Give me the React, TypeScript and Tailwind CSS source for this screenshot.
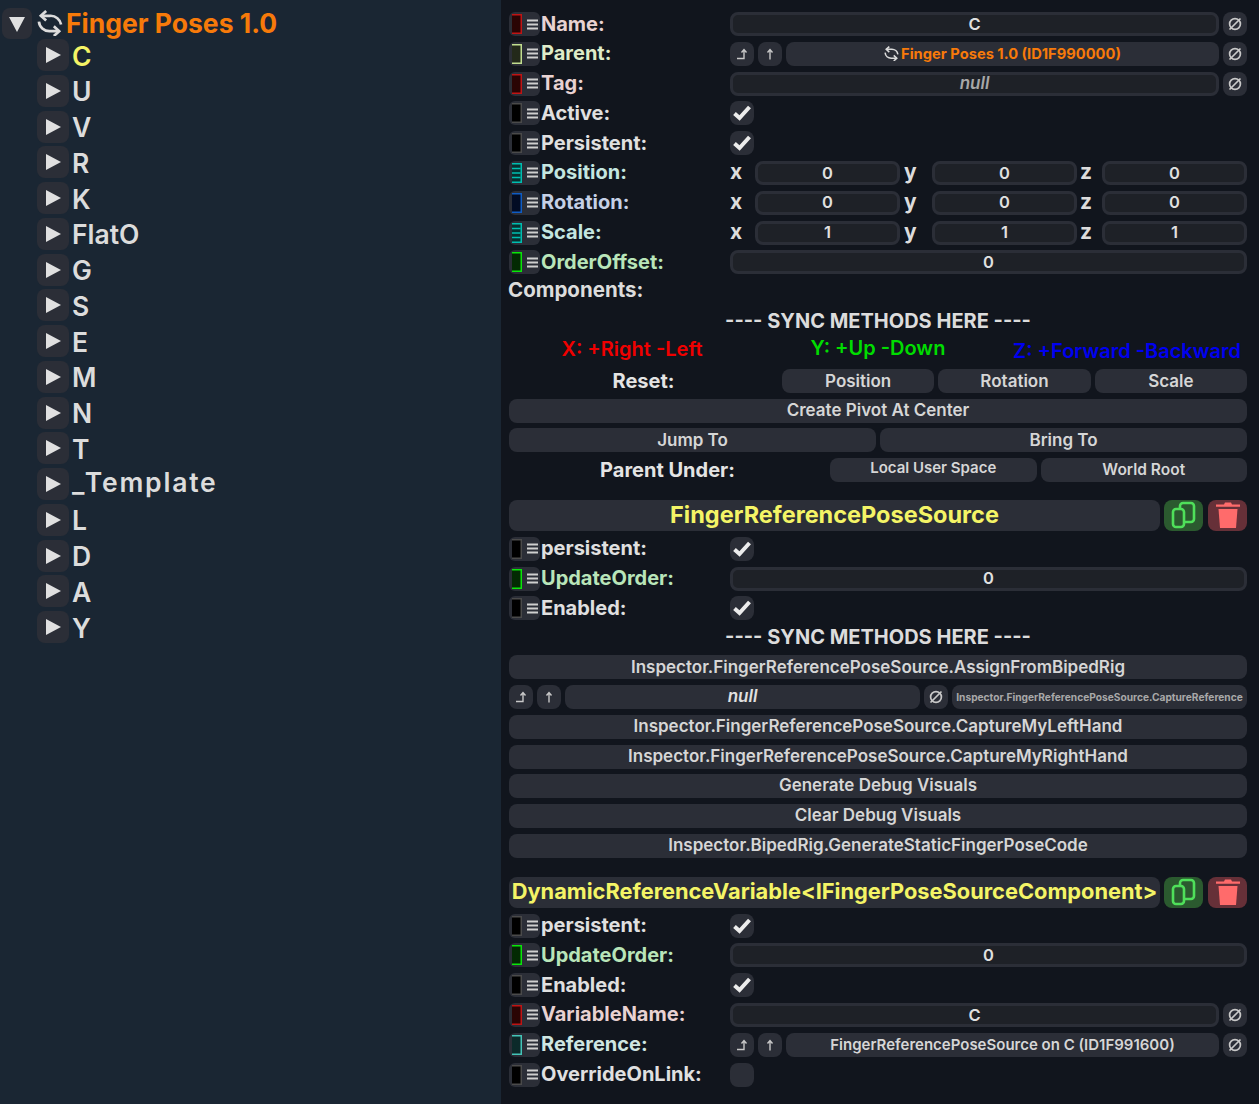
import React from "react";
import { twMerge } from "tailwind-merge";

function Arrow({ open }: { open?: boolean }) {
  return (
    <svg width="18" height="18" viewBox="0 0 18 18">
      {open ? <polygon points="1,2 17,2 9,17" fill="#e0e0e0" /> : <polygon points="2,1 17,9 2,17" fill="#e0e0e0" />}
    </svg>
  );
}

function SyncIcon({ size, cls = "" }: { size: number; cls?: string }) {
  return (
    <svg width={size} height={size} viewBox="0 0 27 27" fill="none" stroke="#dcdcdc" strokeWidth="2.8" className={`shrink-0 ${cls}`}>
      <path d="M4 6H14A11 11 0 0 1 25 15" />
      <path d="M9.5 1L4 6L9.5 11" />
      <path d="M2 12A11 11 0 0 0 13 22H23" />
      <path d="M17.5 17L23 22L17.5 27" />
    </svg>
  );
}

function TreeRow({ label, color = "text-[#dcdcdc]", cls = "pt-px" }: { label: string; color?: string; cls?: string }) {
  return (
    <div className="flex items-center h-8">
      <div className="w-8 h-8 rounded-lg bg-[#2b2e37] flex items-center justify-center"><Arrow /></div>
      <span className={`ml-[3px] text-[26.5px] leading-8 font-semibold ${color} ${cls}`}>{label}</span>
    </div>
  );
}

function Slot({ kind }: { kind: string }) {
  const m: Record<string, [string, string]> = {
    red: ["#c01414", "#2a0404"],
    lime: ["#c2de90", "#23291a"],
    black: ["#4a4a4a", "#000000"],
    teal: ["#00bdb0", "#06302f"],
    blue: ["#0f5cc4", "#020c24"],
    green: ["#0ae60a", "#032a03"],
    ref: ["#45c4b8", "#0c2a2a"],
  };
  const [c, f] = m[kind];
  return (
    <svg width="10" height="20" viewBox="0 0 10 20" className="shrink-0">
      <rect x="0" y="0" width="10" height="20" fill={f} />
      <path d="M0 .75H9.25V19.25H0" fill="none" stroke={c} strokeWidth="1.5" />
      {kind === "teal" && <path d="M0 5.5H8.5M0 10H8.5M0 14.5H8.5" stroke={c} strokeWidth="1.7" />}
    </svg>
  );
}

function Handle({ kind }: { kind: string }) {
  return (
    <div className="w-[31px] h-6 shrink-0 rounded-md bg-[#2b2e37] flex items-center pl-[3px]">
      <Slot kind={kind} />
      <svg width="11" height="11" viewBox="0 0 11 11" className="ml-[5px] shrink-0">
        <path d="M0 1.5H11M0 5.5H11M0 9.5H11" stroke="#cfcfcf" strokeWidth="2" />
      </svg>
    </div>
  );
}

function Label({ kind, text, color }: { kind: string; text: string; color: string }) {
  return (
    <div className="w-[221px] shrink-0 flex items-center h-6">
      <Handle kind={kind} />
      <span className={`ml-px -mt-px text-[20px] leading-6 font-bold whitespace-nowrap ${color}`}>{text}</span>
    </div>
  );
}

function Field({ children, cls = "" }: { children?: React.ReactNode; cls?: string }) {
  return (
    <div className={twMerge("h-6 min-w-0 rounded-lg border-[3px] border-[#2b2e37] bg-[#1e2127] flex items-center justify-center text-[16.5px] font-semibold text-[#e0e0e0]", cls)}>
      {children}
    </div>
  );
}

function Btn({ children, cls = "" }: { children?: React.ReactNode; cls?: string }) {
  return (
    <div className={twMerge("h-6 min-w-0 rounded-lg bg-[#2b2e37] flex items-center justify-center text-[17px] font-semibold text-[#d6d6d6] whitespace-nowrap", cls)}>
      {children}
    </div>
  );
}

function NullBtn() {
  return (
    <Btn cls="w-6 shrink-0">
      <svg width="16" height="16" viewBox="0 0 16 16" fill="none" stroke="#c8c8c8" strokeWidth="1.7">
        <circle cx="8" cy="8" r="5.4" />
        <path d="M2.5 13.5L13.5 2.5" />
      </svg>
    </Btn>
  );
}

function UpBtns() {
  return (
    <>
      <Btn cls="w-6 shrink-0">
        <svg width="14" height="14" viewBox="0 0 14 14" fill="none" stroke="#c8c8c8" strokeWidth="1.4">
          <path d="M2 11.5H9V3.5M6.5 5.5L9 2.5L11.5 5.5" />
        </svg>
      </Btn>
      <Btn cls="w-6 shrink-0">
        <svg width="14" height="14" viewBox="0 0 14 14" fill="none" stroke="#c8c8c8" strokeWidth="1.4">
          <path d="M7 12.5V2.5M4.5 5.5L7 2.5L9.5 5.5" />
        </svg>
      </Btn>
    </>
  );
}

function Check() {
  return (
    <Btn cls="w-6 shrink-0">
      <svg width="20" height="18" viewBox="0 0 20 18" fill="none" stroke="#ececec" strokeWidth="4">
        <path d="M2.5 9.5L7.5 14L17.5 3" />
      </svg>
    </Btn>
  );
}

function CheckRow({ text }: { text: string }) {
  return (
    <div className="flex items-center h-6">
      <Label kind="black" text={text} color="text-[#e0e0e0]" />
      <Check />
    </div>
  );
}

function Vec({ kind, text, color, v }: { kind: string; text: string; color: string; v: string }) {
  const axis = "text-[21px] font-bold text-[#dcdcdc] -mt-0.5";
  return (
    <div className="flex items-center h-6">
      <Label kind={kind} text={text} color={color} />
      <span className={`w-[25px] leading-6 ${axis}`}>x</span>
      <Field cls="w-[145px]">{v}</Field>
      <span className={`w-[32px] pl-[4px] leading-5 ${axis}`}>y</span>
      <Field cls="w-[145px]">{v}</Field>
      <span className={`w-[25px] pl-[3px] leading-6 ${axis}`}>z</span>
      <Field cls="w-[145px]">{v}</Field>
    </div>
  );
}

function NumRow({ text }: { text: string }) {
  return (
    <div className="flex items-center h-6">
      <Label kind="green" text={text} color="text-[#b9e5b9]" />
      <Field cls="flex-1">0</Field>
    </div>
  );
}

function SyncHeading() {
  return (
    <div className="h-6 text-center text-[20px] leading-6 font-bold text-[#dcdcdc]">---- SYNC METHODS HERE ----</div>
  );
}

function Header({ title, cls }: { title: string; cls: string }) {
  return (
    <div className="flex h-[31px] gap-1">
      <div className={`flex-1 min-w-0 rounded-lg bg-[#2b2e37] flex items-center justify-center pb-0.5 font-bold text-[#f4f466] whitespace-nowrap ${cls}`}>{title}</div>
      <div className="w-[39px] rounded-lg bg-[#2b5a2f] flex items-center justify-center">
        <svg width="26" height="28" viewBox="0 0 26 28" fill="none" stroke="#4fe05a" strokeWidth="2.6">
          <rect x="2" y="8" width="11" height="18" rx="3" />
          <path d="M9 8V5a3 3 0 0 1 3-3h8a3 3 0 0 1 3 3v13a3 3 0 0 1-3 3h-7" />
        </svg>
      </div>
      <div className="w-[39px] rounded-lg bg-[#663038] flex items-center justify-center ml-px">
        <svg width="24" height="28" viewBox="0 0 24 28" fill="#ff6b6b">
          <path d="M8 3.5 9 1.5H15L16 3.5H24V5.8H0V3.5Z" />
          <path d="M2.5 8H21.5L20 27H4Z" />
        </svg>
      </div>
    </div>
  );
}

export default function App() {
  const names = ["U", "V", "R", "K", "FlatO", "G", "S", "E", "M", "N", "T"];
  const names2 = ["L", "D", "A", "Y"];
  return (
    <div className="w-[1259px] h-[1104px] flex overflow-hidden font-['Inter',sans-serif] bg-[#11151d]">
      <div className="w-[501px] shrink-0 bg-[#1a2633] pt-2 pl-0.5">
        <div className="flex items-center h-[31px]">
          <div className="w-[30px] h-[31px] rounded-lg bg-[#2b2e37] flex items-center justify-center"><Arrow open /></div>
          <SyncIcon size={26} cls="ml-[5px] -mt-px" />
          <span className="ml-[3px] -mt-0.5 text-[26.5px] leading-8 font-bold text-[#f77a0a] whitespace-nowrap">Finger Poses 1.0</span>
        </div>
        <div className="flex flex-col gap-[3.75px] pl-[35px]">
          <TreeRow label="C" color="text-[#f4f466]" />
          {names.map((n) => <TreeRow key={n} label={n} />)}
          <TreeRow label="_Template" cls="tracking-[1.8px] -mt-1" />
          {names2.map((n) => <TreeRow key={n} label={n} />)}
        </div>
      </div>

      <div className="w-[738px] shrink-0 ml-2 pt-3 flex flex-col">
        <div className="flex flex-col gap-[5.8px]">
          <div className="flex items-center gap-1 h-6">
            <Label kind="red" text="Name:" color="text-[#e8d2d2]" />
            <Field cls="flex-1 -ml-1">C</Field>
            <NullBtn />
          </div>
          <div className="flex items-center gap-1 h-6">
            <Label kind="lime" text="Parent:" color="text-[#dfecc9]" />
            <div className="-ml-1 flex gap-1 flex-1 min-w-0">
              <UpBtns />
              <Btn cls="flex-1 text-[#f77a0a] text-[14.7px] font-bold">
                <SyncIcon size={15} cls="mr-[2px]" />
                Finger Poses 1.0 (ID1F990000)
              </Btn>
            </div>
            <NullBtn />
          </div>
          <div className="flex items-center gap-1 h-6">
            <Label kind="red" text="Tag:" color="text-[#e8d2d2]" />
            <Field cls="flex-1 -ml-1 italic text-[#a8a8a8] text-[17px]">null</Field>
            <NullBtn />
          </div>
          <CheckRow text="Active:" />
          <CheckRow text="Persistent:" />
          <Vec kind="teal" text="Position:" color="text-[#c4e6e0]" v="0" />
          <Vec kind="blue" text="Rotation:" color="text-[#c5d0e6]" v="0" />
          <Vec kind="teal" text="Scale:" color="text-[#c4e6e0]" v="1" />
          <div className="flex items-center h-6">
            <Label kind="green" text="OrderOffset:" color="text-[#b9e5b9]" />
            <Field cls="flex-1">0</Field>
          </div>
        </div>

        <div className="mt-0.5 h-[27px] -ml-px text-[20.5px] leading-[27px] font-bold text-[#dcdcdc]">Components:</div>
        <div className="mt-1.5"><SyncHeading /></div>

        <div className="mt-[3px] h-[26px] flex text-[20px] leading-[26px] font-semibold whitespace-nowrap">
          <div className="w-[246px] text-center text-[#f00000]">X: +Right -Left</div>
          <div className="w-[246px] text-center text-[#00dc00] -mt-px">Y: +Up -Down</div>
          <div className="w-[246px] text-center text-[#0000f0] mt-0.5 pl-1.5">Z: +Forward -Backward</div>
        </div>

        <div className="mt-[7px] flex flex-col gap-[5.5px]">
          <div className="flex items-center gap-1 h-6">
            <div className="w-[269px] text-center text-[20px] font-bold text-[#e4e4e4]">Reset:</div>
            <Btn cls="flex-1">Position</Btn>
            <Btn cls="flex-1">Rotation</Btn>
            <Btn cls="flex-1">Scale</Btn>
          </div>
          <Btn>Create Pivot At Center</Btn>
          <div className="flex gap-1">
            <Btn cls="flex-1">Jump To</Btn>
            <Btn cls="flex-1">Bring To</Btn>
          </div>
          <div className="flex items-center gap-1 h-6">
            <div className="w-[317px] text-center text-[20px] font-bold text-[#e4e4e4]">Parent Under:</div>
            <Btn cls="flex-1 text-[15px]"><span className="-mt-[3px]">Local User Space</span></Btn>
            <Btn cls="flex-1 text-[15.5px]">World Root</Btn>
          </div>
        </div>

        <div className="mt-[18px]"><Header title="FingerReferencePoseSource" cls="text-[23.5px]" /></div>

        <div className="mt-1.5 flex flex-col gap-[5.8px]">
          <CheckRow text="persistent:" />
          <NumRow text="UpdateOrder:" />
          <CheckRow text="Enabled:" />
        </div>

        <div className="mt-[5px]"><SyncHeading /></div>

        <div className="mt-1.5 flex flex-col gap-[5.7px]">
          <Btn>Inspector.FingerReferencePoseSource.AssignFromBipedRig</Btn>
          <div className="flex gap-1">
            <UpBtns />
            <Btn cls="flex-1 italic text-[#e0e0e0]">null</Btn>
            <NullBtn />
            <Btn cls="w-[295px] shrink-0 text-[10.2px] font-bold text-[#a8a8a8]">Inspector.FingerReferencePoseSource.CaptureReference</Btn>
          </div>
          <Btn>Inspector.FingerReferencePoseSource.CaptureMyLeftHand</Btn>
          <Btn>Inspector.FingerReferencePoseSource.CaptureMyRightHand</Btn>
          <Btn>Generate Debug Visuals</Btn>
          <Btn>Clear Debug Visuals</Btn>
          <Btn>Inspector.BipedRig.GenerateStaticFingerPoseCode</Btn>
        </div>

        <div className="mt-[19px]"><Header title="DynamicReferenceVariable<IFingerPoseSourceComponent>" cls="text-[21.8px]" /></div>

        <div className="mt-1.5 flex flex-col gap-[5.8px]">
          <CheckRow text="persistent:" />
          <NumRow text="UpdateOrder:" />
          <CheckRow text="Enabled:" />
          <div className="flex items-center gap-1 h-6">
            <Label kind="red" text="VariableName:" color="text-[#e8d2d2]" />
            <Field cls="flex-1 -ml-1">C</Field>
            <NullBtn />
          </div>
          <div className="flex items-center gap-1 h-6">
            <Label kind="ref" text="Reference:" color="text-[#cfe6e2]" />
            <div className="-ml-1 flex gap-1 flex-1 min-w-0">
              <UpBtns />
              <Btn cls="flex-1 text-[15px]">FingerReferencePoseSource on C (ID1F991600)</Btn>
            </div>
            <NullBtn />
          </div>
          <div className="flex items-center h-6">
            <Label kind="black" text="OverrideOnLink:" color="text-[#e0e0e0]" />
            <Btn cls="w-6" />
          </div>
        </div>
      </div>
    </div>
  );
}
